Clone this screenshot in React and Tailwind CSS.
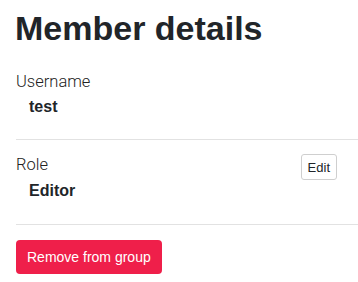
export default function App() {
  return (
    <div className="w-[358px] h-[282px] bg-white pl-4 text-[#212529] font-['Liberation_Sans',Arial,sans-serif]">
      <h1 className="pt-2 -ml-px text-[34px] leading-[40px] font-bold">Member details</h1>
      <div className="mt-[9px] pt-[15px] pb-[22px] border-b border-[#e2e2e2]">
        <div className="text-[16.5px] leading-5 font-light font-['Roboto',sans-serif] text-[#222222]">Username</div>
        <div className="mt-[5px] ml-[13px] text-[16px] leading-5 font-bold">test</div>
      </div>
      <div className="flex items-start justify-between pt-[15px] pb-[23px] pr-[21px] border-b border-[#e2e2e2]">
        <div>
          <div className="text-[16.5px] leading-5 font-light font-['Roboto',sans-serif] text-[#222222]">Role</div>
          <div className="mt-[6px] ml-[13px] text-[16px] leading-5 font-bold">Editor</div>
        </div>
        <button className="-mt-px h-[26px] px-[6px] text-[13px] leading-none text-[#212529] bg-white border border-[#cfcfcf] rounded-[3px]">
          Edit
        </button>
      </div>
      <button className="mt-[15px] h-[34px] px-[11px] rounded-[4px] bg-[#ef1f4a] text-white text-[14px] leading-none">
        Remove from group
      </button>
    </div>
  );
}
